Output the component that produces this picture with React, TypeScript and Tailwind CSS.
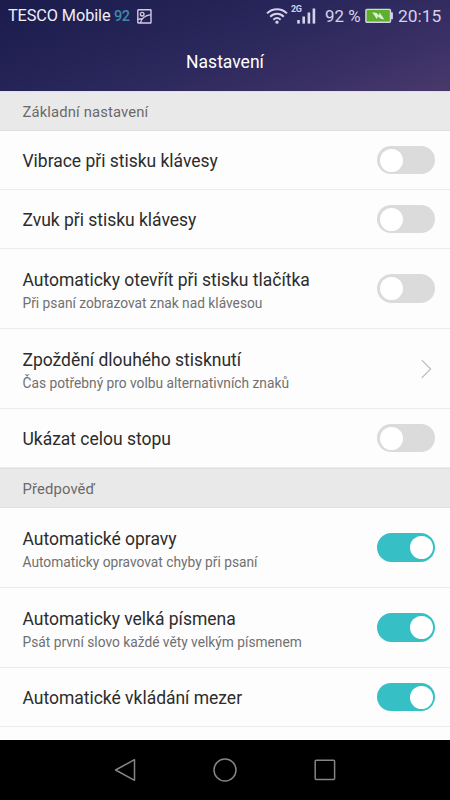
import { clsx } from "clsx";

interface SettingRowProps {
  title: string;
  description?: string;
  checked?: boolean;
  link?: boolean;
}

const WifiIcon = () => (
  <svg className="block h-[18px] w-[22px]" viewBox="0 0 22 18" fill="none" stroke="#d6d2ea" strokeWidth="2">
    <path d="M1 6.4C6.6 .8 15.4 .8 21 6.4" />
    <path d="M4.2 9.7C8 5.9 14 5.9 17.8 9.7" />
    <path d="M7.4 12.7C9.6 10.7 12.4 10.7 14.6 12.7" />
    <circle cx="11" cy="15.2" r="1.6" fill="#d6d2ea" stroke="none" />
  </svg>
);

const SignalIcon = () => (
  <svg className="block h-[18px] w-[19px]" viewBox="0 0 19 18" fill="#d6d2ea">
    <rect x=".2" y="13" width="2.6" height="3.6" />
    <rect x="5.4" y="9.5" width="2.6" height="7.1" />
    <rect x="10.6" y="5.5" width="2.6" height="11.1" />
    <rect x="15.6" y="1.5" width="2.6" height="15.1" />
  </svg>
);

const BatteryIcon = () => (
  <svg className="block h-[16px] w-[29px]" viewBox="0 0 29 16">
    <rect x=".9" y="1.4" width="24.6" height="12.8" rx="1" fill="#5db02c" stroke="#d6d2ea" strokeWidth="1.4" />
    <rect x="26" y="4.3" width="1.9" height="7" rx=".6" fill="#d6d2ea" />
    <path d="M7.2 4.2L11.6 5L14 7.6L14.6 4.4L19.4 11.6L15.4 10.6L12.8 8.2L12 11.2Z" fill="#e3eedf" />
  </svg>
);

const PictureIcon = () => (
  <svg className="block h-[15px] w-[15px]" viewBox="0 0 15 15" fill="none" stroke="#d3cbe2" strokeWidth="1.4">
    <rect x=".8" y=".8" width="13.2" height="13.2" rx=".6" />
    <circle cx="5.2" cy="5.2" r="1.8" />
    <path d="M3.4 13.8C4.4 9.5 8.5 6.4 13.8 5.6M1 10.2L5.4 9.8" />
  </svg>
);

const StatusBar = () => (
  <div className="flex h-[33px] items-center justify-between whitespace-nowrap pl-2 pr-[7px] text-[#d6d2ea]">
    <div className="flex items-center">
      <span className="w-[102px] text-[16.3px] tracking-[-0.1px] text-[#f0eef8]">TESCO Mobile</span>
      <span className="ml-[4px] w-[15px] text-[14.5px] font-medium tracking-[-0.6px] text-[#3f8aab]">92</span>
      <span className="ml-[8px]"><PictureIcon /></span>
    </div>
    <div className="flex items-center">
      <WifiIcon />
      <div className="relative ml-[9px]">
        <span className="absolute -left-[6px] -top-[2px] text-[9px] font-bold leading-none tracking-[-0.4px]">2G</span>
        <SignalIcon />
      </div>
      <span className="ml-[9px] w-[40px] text-[16.9px]">92&nbsp;%</span>
      <BatteryIcon />
      <span className="ml-[4px] w-[45px] text-[17.4px]">20:15</span>
    </div>
  </div>
);

const Toggle = ({ checked = false }: { checked?: boolean }) => (
  <button
    role="switch"
    aria-checked={checked}
    className={clsx(
      "flex h-[28.5px] w-[58px] flex-none items-center rounded-full px-[2.5px]",
      checked ? "justify-end bg-[#36bfc5]" : "justify-start bg-[#dbdbdb]"
    )}
  >
    <span className="h-[23px] w-[23px] rounded-full bg-white" />
  </button>
);

const SectionTitle = ({ children }: { children: string }) => (
  <div className="flex h-[40px] items-center border-y border-[#e0e0e0] bg-[#e9e9e9] pl-[22.5px] pt-[2px] text-[14.8px] tracking-[0.14px] text-[#6a6a6a]">
    {children}
  </div>
);

const SettingRow = ({ title, description, checked, link }: SettingRowProps) => (
  <div
    className={clsx(
      "flex items-center justify-between border-b border-[#ececec] pl-[22.5px] pr-[15px]",
      description ? "h-[80px]" : "h-[59px]"
    )}
  >
    <div className={description ? "pt-[4px]" : "pt-[2px]"}>
      <div className="text-[17.5px] leading-[24px] tracking-[-0.02px] text-[#2c2c2c]">{title}</div>
      {description && (
        <div className="pt-px text-[13.75px] leading-[20px] text-[#707070]">{description}</div>
      )}
    </div>
    {link ? (
      <svg className="mr-[3px] h-[20px] w-[12px]" viewBox="0 0 12 20" fill="none" stroke="#b8b8b8" strokeWidth="1.1">
        <path d="M1.8 1.2L10.6 10L1.8 18.8" />
      </svg>
    ) : (
      <Toggle checked={checked} />
    )}
  </div>
);

const NavigationBar = () => (
  <div className="flex h-[60px] items-center justify-center gap-[76px] bg-black">
    <svg className="h-6 w-6" viewBox="0 0 24 24" fill="none" stroke="#858585" strokeWidth="1.5" strokeLinejoin="round">
      <path d="M2.6 12L21.5 1.7V22.3Z" />
    </svg>
    <svg className="h-6 w-6" viewBox="0 0 24 24" fill="none" stroke="#858585" strokeWidth="1.5">
      <circle cx="12" cy="12" r="11" />
    </svg>
    <svg className="h-6 w-6" viewBox="0 0 24 24" fill="none" stroke="#858585" strokeWidth="1.5">
      <rect x="2.2" y="2.2" width="19.4" height="19.4" rx="1" />
    </svg>
  </div>
);

const App = () => {
  return (
    <div className="flex h-[800px] w-[450px] flex-col overflow-hidden bg-[#fdfdfd] font-[Roboto,sans-serif]">
      <header className="h-[91px] flex-none bg-[linear-gradient(160deg,#1b1b4c_0%,#28265a_45%,#3a3065_78%,#49396b_100%)]">
        <StatusBar />
        <h1 className="pt-[16px] text-center text-[17.5px] leading-[26px] text-white">Nastavení</h1>
      </header>
      <main className="min-h-0 flex-1 overflow-hidden">
        <SectionTitle>Základní nastavení</SectionTitle>
        <SettingRow title="Vibrace při stisku klávesy" />
        <SettingRow title="Zvuk při stisku klávesy" />
        <SettingRow title="Automaticky otevřít při stisku tlačítka" description="Při psaní zobrazovat znak nad klávesou" />
        <SettingRow title="Zpoždění dlouhého stisknutí" description="Čas potřebný pro volbu alternativních znaků" link />
        <SettingRow title="Ukázat celou stopu" />
        <SectionTitle>Předpověď</SectionTitle>
        <SettingRow title="Automatické opravy" description="Automaticky opravovat chyby při psaní" checked />
        <SettingRow title="Automaticky velká písmena" description="Psát první slovo každé věty velkým písmenem" checked />
        <SettingRow title="Automatické vkládání mezer" checked />
      </main>
      <NavigationBar />
    </div>
  );
};

export default App;
